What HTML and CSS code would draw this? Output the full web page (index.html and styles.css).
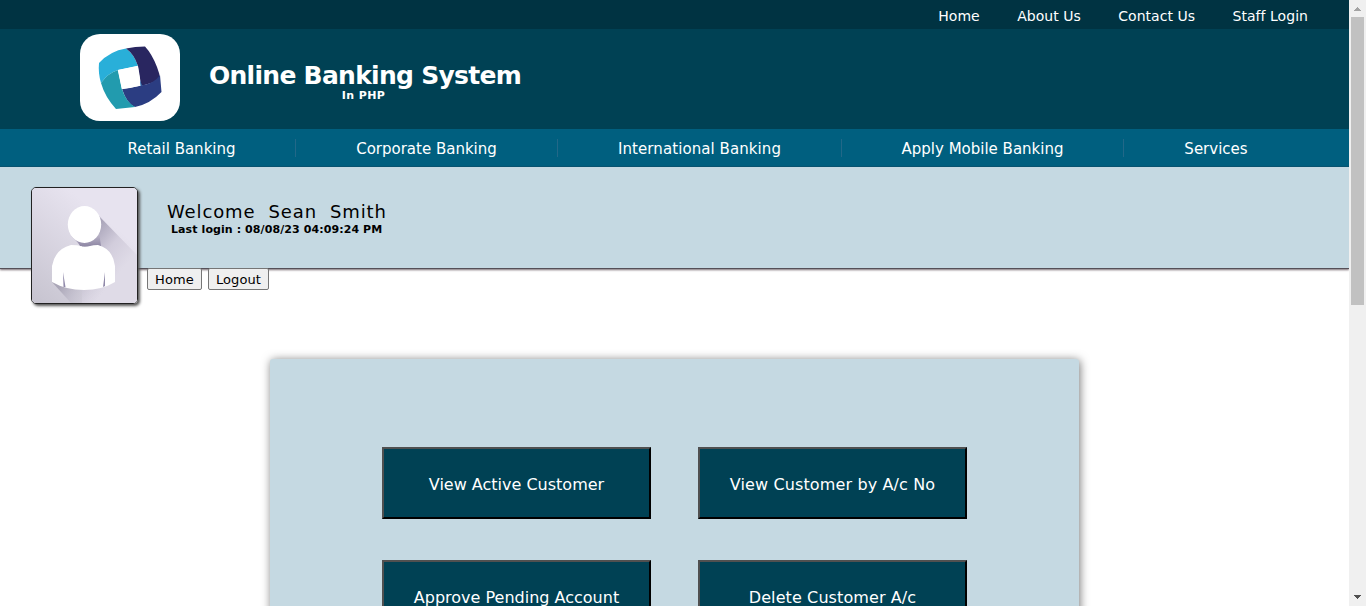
FILE: index.html
```html
<!DOCTYPE html>
<html lang="en">
<head>
<meta charset="utf-8">
<title>Online Banking System</title>
<link rel="stylesheet" href="styles.css">
</head>
<body>
<div class="page">
  <div class="topbar">
    <a>Home</a><a>About Us</a><a>Contact Us</a><a>Staff Login</a>
  </div>
  <header class="header">
    <div class="logo">
      <svg width="100" height="87" viewBox="0 0 100 87">
        <path fill="#29afd9" d="M19 29Q30 17 46 14.500Q54 20 58 32L38 36Q28 39 21 49Q18 39 19 29Z"/>
        <path fill="#292660" d="M46 14.500Q55 12.500 65 12.500Q72 20 77 33Q80 40 80 46Q72 49 61 52Q60 42 58 32Q54 20 46 14.500Z"/>
        <path fill="#2b3d82" d="M42 55Q52 54 61 51.500Q74 50 80 41L81.500 58Q70 70 55 73Q47 70 42 55Z"/>
        <path fill="#229bae" d="M21 49Q28 39 38 36L42 55Q46 68 55 73L36 75Q25 63 21 49Z"/>
        <path fill="#fff" d="M37.800 36L57.800 31.800L60.500 51.800L41.800 55.300Z"/>
        <path fill="#286eb4" d="M60 46L62 51.500L60.500 51.800Z"/>
      </svg>
    </div>
    <div class="brand">
      <h1>Online Banking System</h1>
      <p>In PHP</p>
    </div>
  </header>
  <nav class="nav">
    <a>Retail Banking</a><a>Corporate Banking</a><a class="n-intl">International Banking</a><a>Apply Mobile Banking</a><a class="n-services">Services</a>
  </nav>
  <section class="welcome">
    <div class="avatar">
      <svg width="106" height="115" viewBox="0 0 106 115">
        <defs>
          <linearGradient id="bg" x1="0" y1="1" x2="0.600" y2="0.200"><stop offset="0" stop-color="#c6c3cf"/><stop offset="1" stop-color="#e7e3ef"/></linearGradient>
          <linearGradient id="cast" gradientUnits="userSpaceOnUse" x1="62" y1="42" x2="98" y2="72"><stop offset="0" stop-color="#aaa5ba"/><stop offset="0.500" stop-color="#d2cddc"/><stop offset="1" stop-color="#dfdbe7"/></linearGradient>
          <linearGradient id="low" gradientUnits="userSpaceOnUse" x1="30" y1="95" x2="64" y2="118"><stop offset="0" stop-color="#aaa6b7"/><stop offset="1" stop-color="#dedae6" stop-opacity="0"/></linearGradient>
          <linearGradient id="neck" x1="0" y1="0" x2="0" y2="1"><stop offset="0" stop-color="#c5bfd0"/><stop offset="1" stop-color="#8f88a5"/></linearGradient>
        </defs>
        <path fill="url(#bg)" d="M0 0H106V115H0Z"/>
        <path fill="url(#cast)" d="M67 28L106 68V115H50V53Z"/>
        <path fill="url(#low)" d="M20 94L39 115H106V90L83 80Z"/>
        <path fill="url(#neck)" d="M39 48Q53 58 67 44L69 58H48Q46 54 39 48Z"/>
        <ellipse cx="52.500" cy="36.500" rx="16.700" ry="18.500" fill="#fff"/>
        <path fill="#fff" d="M39 57Q46 57 48 58Q53 60 58 58Q61 57 66 57Q81 61 83 78V94Q70 102 52 102Q34 102 20 94V78Q23 61 39 57Z"/>
        <path fill="#918aaa" d="M31 84L33.500 99H31.500ZM73 84V98L71 99Z"/>
      </svg>
    </div>
    <div class="greeting">
      <p class="name">Welcome&nbsp; Sean&nbsp; Smith</p>
      <p class="last">Last login : 08/08/23 04:09:24 PM</p>
    </div>
  </section>
  <div class="actions"><button class="b-home">Home</button><button class="b-logout">Logout</button></div>
  <main class="panel">
    <button>View Active Customer</button>
    <button class="b-acno">View Customer by A/c No</button>
    <button>Approve Pending Account</button>
    <button class="b-delete">Delete Customer A/c</button>
  </main>
</div>
<div class="scrollbar">
  <svg width="17" height="17" viewBox="0 0 17 17" shape-rendering="crispEdges"><path fill="#a3a3a3" d="M8 7h1v1h1v1h1v1h1v1H5v-1h1V9h1V8h1z"/></svg>
  <div class="thumb"></div>
  <svg class="down" width="17" height="17" viewBox="0 0 17 17" shape-rendering="crispEdges"><path fill="#505050" d="M5 6h7v1h-1v1h-1v1H9v1H8V9H7V8H6V7H5z"/></svg>
</div>
</body>
</html>
```
FILE: styles.css
```css
* { box-sizing: border-box; }
body {
  margin: 0;
  display: flex;
  height: 606px;
  overflow: hidden;
  background: #fff;
  font-family: Verdana, "DejaVu Sans", sans-serif;
}
h1, p { margin: 0; }
a, h1, p, button { white-space: nowrap; }
.page { width: 1349px; height: 606px; overflow: hidden; }
.topbar {
  display: flex;
  justify-content: flex-end;
  gap: 37.4px;
  height: 29px;
  padding: 0 41px 0 0;
  background: #003342;
  color: #fff;
  font-size: 14px;
  line-height: 32px;
  letter-spacing: 0.04px;
}
.header {
  display: flex;
  height: 100px;
  padding: 5px 0 0 80px;
  background: #004154;
  color: #fff;
}
.logo { width: 100px; height: 87px; border-radius: 20px; overflow: hidden; background: #fff; }
.brand { width: 312px; margin-left: 29px; padding-top: 27px; }
.brand h1 { font-size: 25px; line-height: 30px; letter-spacing: -0.72px; }
.brand p { font-size: 11px; font-weight: bold; line-height: 14px; letter-spacing: 0.4px; text-align: center; margin-top: -2px; padding-right: 3px; }
.nav {
  display: grid;
  grid-template-columns: 228px 262px 284px 282px 184px;
  align-items: center;
  height: 38px;
  padding-left: 68px;
  background: #005f7f;
  border-bottom: 1px solid #005270;
  color: #fff;
  font-size: 15px;
  text-align: center;
}
.nav a { height: 18px; line-height: 21px; border-right: 1px solid #226888; }
.nav .n-intl { letter-spacing: 0.08px; }
.nav .n-services { border-right: 0; }
.welcome {
  position: relative;
  display: flex;
  align-items: flex-start;
  height: 102px;
  padding: 20px 0 0 31px;
  background: #c5d9e2;
  border-bottom: 1px solid #555058;
  box-shadow: 0 1px 2px #776a70;
}
.avatar {
  width: 107px;
  height: 117px;
  border: 1px solid #222;
  border-radius: 5px;
  overflow: hidden;
  box-shadow: 2px 2px 3px #555;
}
.avatar svg, .logo svg, .scrollbar svg { display: block; }
.greeting { margin-left: 29px; padding-top: 13px; }
.name { font-size: 18px; line-height: 24px; letter-spacing: 0.86px; }
.last { font-size: 11px; line-height: 14px; font-weight: bold; letter-spacing: 0.09px; margin: -1px 0 0 4px; }
.actions { display: flex; gap: 6px; height: 22px; margin-left: 147px; position: relative; margin-top: -1px; }
.actions button {
  height: 22px;
  padding: 1px 0 0;
  border: 1px solid #767676;
  border-radius: 2px;
  background: #efefef;
  color: #000;
  font: 13px/20px Verdana, "DejaVu Sans", sans-serif;
  letter-spacing: 0.1px;
}
.actions .b-home { width: 55px; }
.actions .b-logout { width: 61px; }
.panel {
  display: grid;
  grid-template-columns: 269px 269px;
  grid-auto-rows: 72px;
  gap: 41px 47px;
  width: 809px;
  height: 500px;
  margin: 69px 0 0 270px;
  padding: 88px 0 0 112px;
  border-radius: 3px;
  background: #c5d9e2;
  box-shadow: 1px 1px 10px #777;
}
.panel button {
  padding: 4px 0 0;
  border: 2px solid;
  border-color: #505050 #000 #000 #505050;
  background: #004154;
  color: #fff;
  font: 16px/20px Verdana, "DejaVu Sans", sans-serif;
}
.panel .b-acno { letter-spacing: 0.13px; }
.panel .b-delete { letter-spacing: 0.1px; }
.scrollbar { display: flex; flex-direction: column; width: 17px; height: 606px; background: #f0f0f0; }
.thumb { width: 13px; height: 288px; margin-left: 2px; background: #c1c1c1; }
.down { margin-top: auto; }
```
